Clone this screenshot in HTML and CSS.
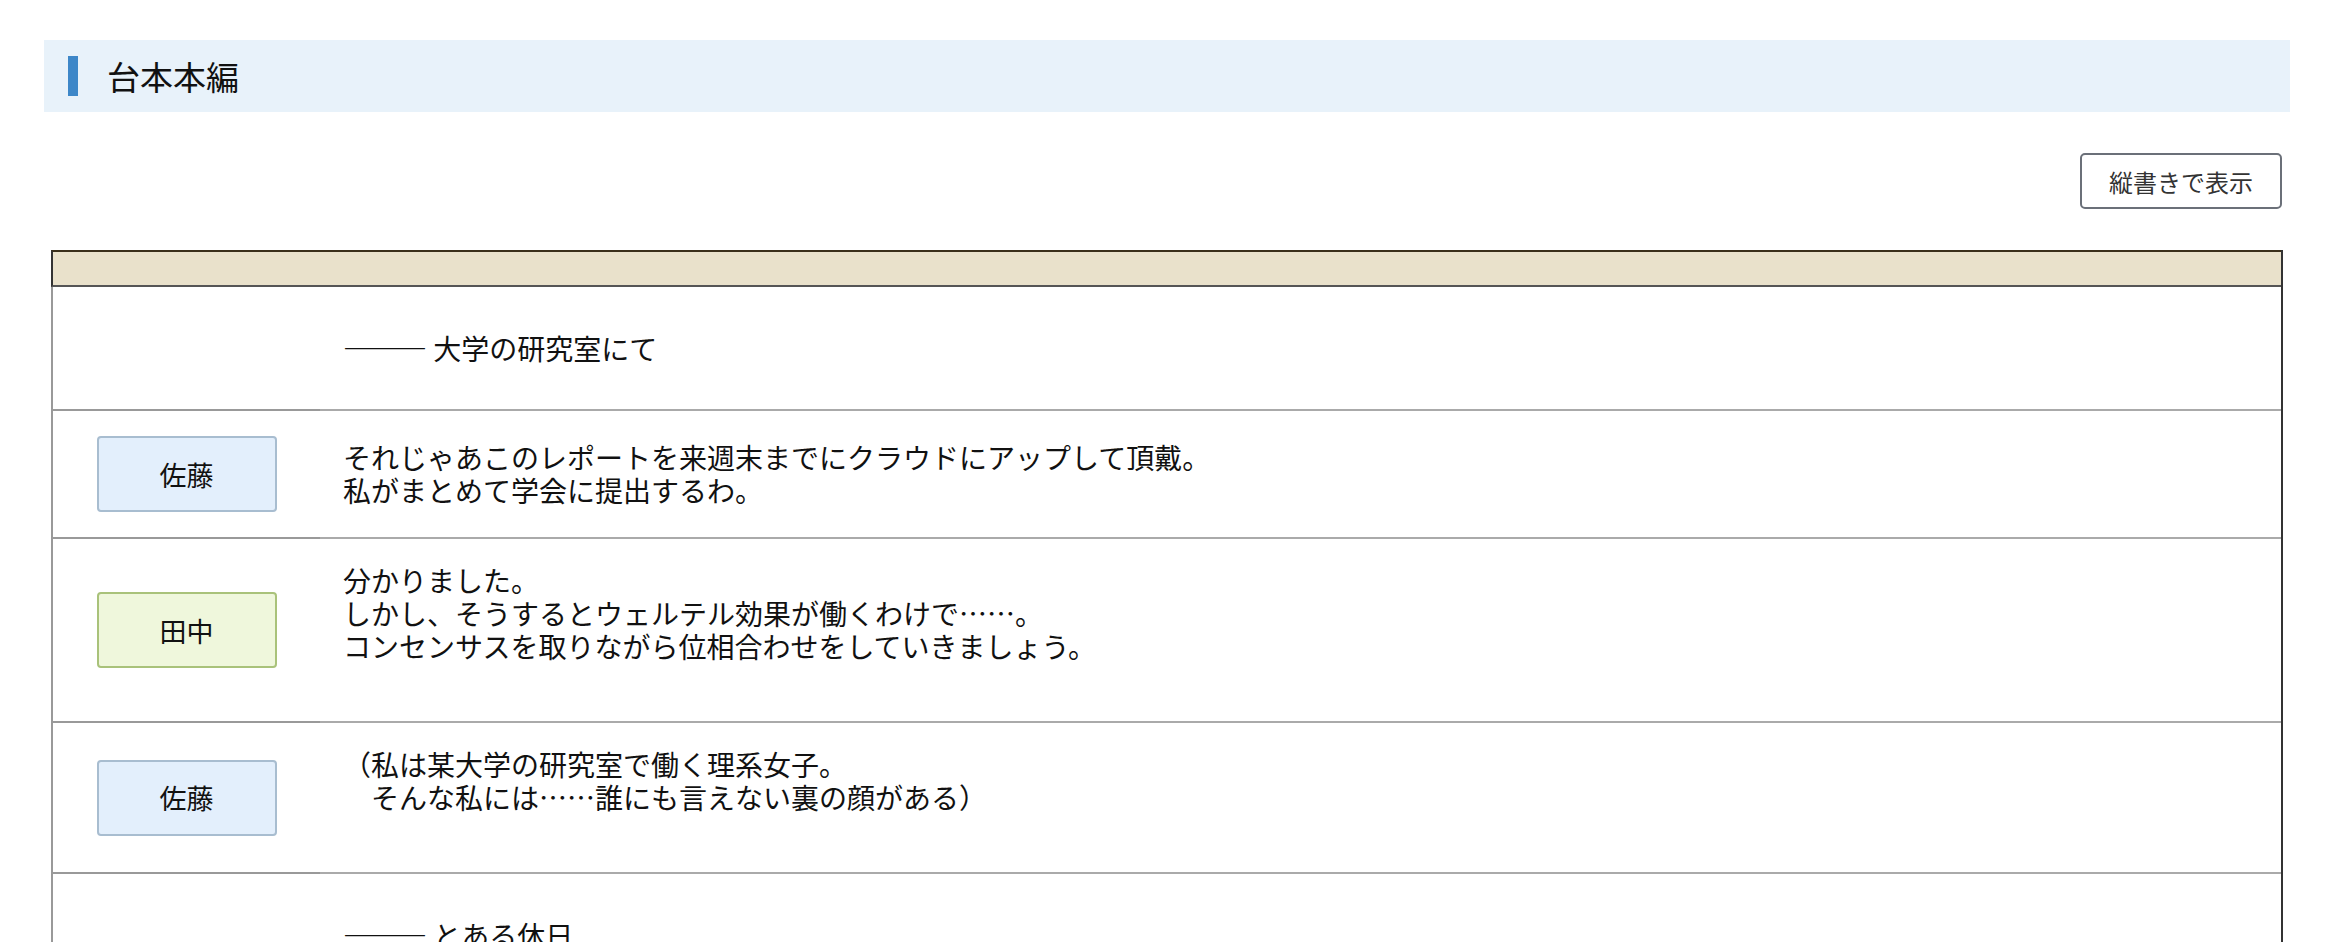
FILE: index.html
```html
<!DOCTYPE html>
<html lang="ja">

<head>
  <meta charset="UTF-8">
  <meta name="viewport" content="width=device-width, initial-scale=1.0">
  <title>台本本編</title>
  <link rel="stylesheet" href="styles.css">
</head>

<body>
  <div class="page">
    <h2 class="section-title">台本本編</h2>

    <div class="toolbar">
      <button class="btn-vertical">縦書きで表示</button>
    </div>

    <div class="script">
      <div class="script-head"></div>

      <div class="line narration">
        <div class="speaker"></div>
        <div class="words"><p>——— 大学の研究室にて</p></div>
      </div>

      <div class="line">
        <div class="speaker"><span class="name sato">佐藤</span></div>
        <div class="words"><p>それじゃあこのレポートを来週末までにクラウドにアップして頂戴。<br>私がまとめて学会に提出するわ。</p></div>
      </div>

      <div class="line">
        <div class="speaker"><span class="name tanaka">田中</span></div>
        <div class="words"><p>分かりました。<br>しかし、そうするとウェルテル効果が働くわけで……。<br>コンセンサスを取りながら位相合わせをしていきましょう。<br><br></p></div>
      </div>

      <div class="line">
        <div class="speaker"><span class="name sato">佐藤</span></div>
        <div class="words"><p>（私は某大学の研究室で働く理系女子。<br>　そんな私には……誰にも言えない裏の顔がある）<br><br></p></div>
      </div>

      <div class="line narration">
        <div class="speaker"></div>
        <div class="words"><p>——— とある休日</p></div>
      </div>

      <div class="line">
        <div class="speaker"><span class="name tanaka">田中</span></div>
        <div class="words"><p>あれ、佐藤さんじゃないですか。</p></div>
      </div>
    </div>
  </div>
</body>

</html>
```

FILE: styles.css
```css
body {
  font-family: "Noto Sans CJK JP", "Noto Sans", sans-serif;
  margin: 0;
  color: #111;
}

.page {
  padding: 40px 62px 40px 44px;
}

.section-title {
  display: flex;
  align-items: center;
  height: 72px;
  margin: 0;
  padding-left: 24px;
  background-color: #e8f2fa;
  font-size: 33px;
  font-weight: normal;
  line-height: 1;
}

.section-title::before {
  content: "";
  width: 10px;
  height: 40px;
  margin-right: 29px;
  background-color: #3d87c8;
}

.toolbar {
  display: flex;
  justify-content: flex-end;
  margin-top: 41px;
  padding-right: 8px;
}

.btn-vertical {
  height: 56px;
  padding: 0 27px;
  border: 2px solid #6b7079;
  border-radius: 5px;
  background-color: #fff;
  color: #333;
  font-family: inherit;
  font-size: 24px;
  cursor: pointer;
}

.btn-vertical:hover {
  background-color: #f2f2f2;
}

.script {
  margin: 41px 7px 0 7px;
  border-right: 2px solid #333;
}

.script-head {
  height: 33px;
  background-color: #e9e1cb;
  border-top: 2px solid #3a2f1a;
  border-left: 2px solid #333;
  border-bottom: 2px solid #555;
}

.line {
  display: flex;
  border-left: 2px solid #999;
}

.speaker {
  display: flex;
  align-items: center;
  justify-content: center;
  flex: 0 0 267px;
  min-height: 72px;
  padding: 25px 0;
  border-bottom: 2px solid #999;
}

.words {
  flex: 1;
  display: flex;
  align-items: center;
  padding: 25px 23px 25px 23px;
  border-bottom: 2px solid #aaa;
  font-size: 28px;
  line-height: 33px;
}

.words p {
  margin: 0;
}

.name {
  display: flex;
  align-items: center;
  justify-content: center;
  width: 176px;
  height: 72px;
  border: 2px solid;
  border-radius: 4px;
  font-size: 27px;
}

.sato {
  background-color: #e3effc;
  border-color: #a8bdd0;
}

.tanaka {
  background-color: #eff7dc;
  border-color: #a9c27a;
}
```
